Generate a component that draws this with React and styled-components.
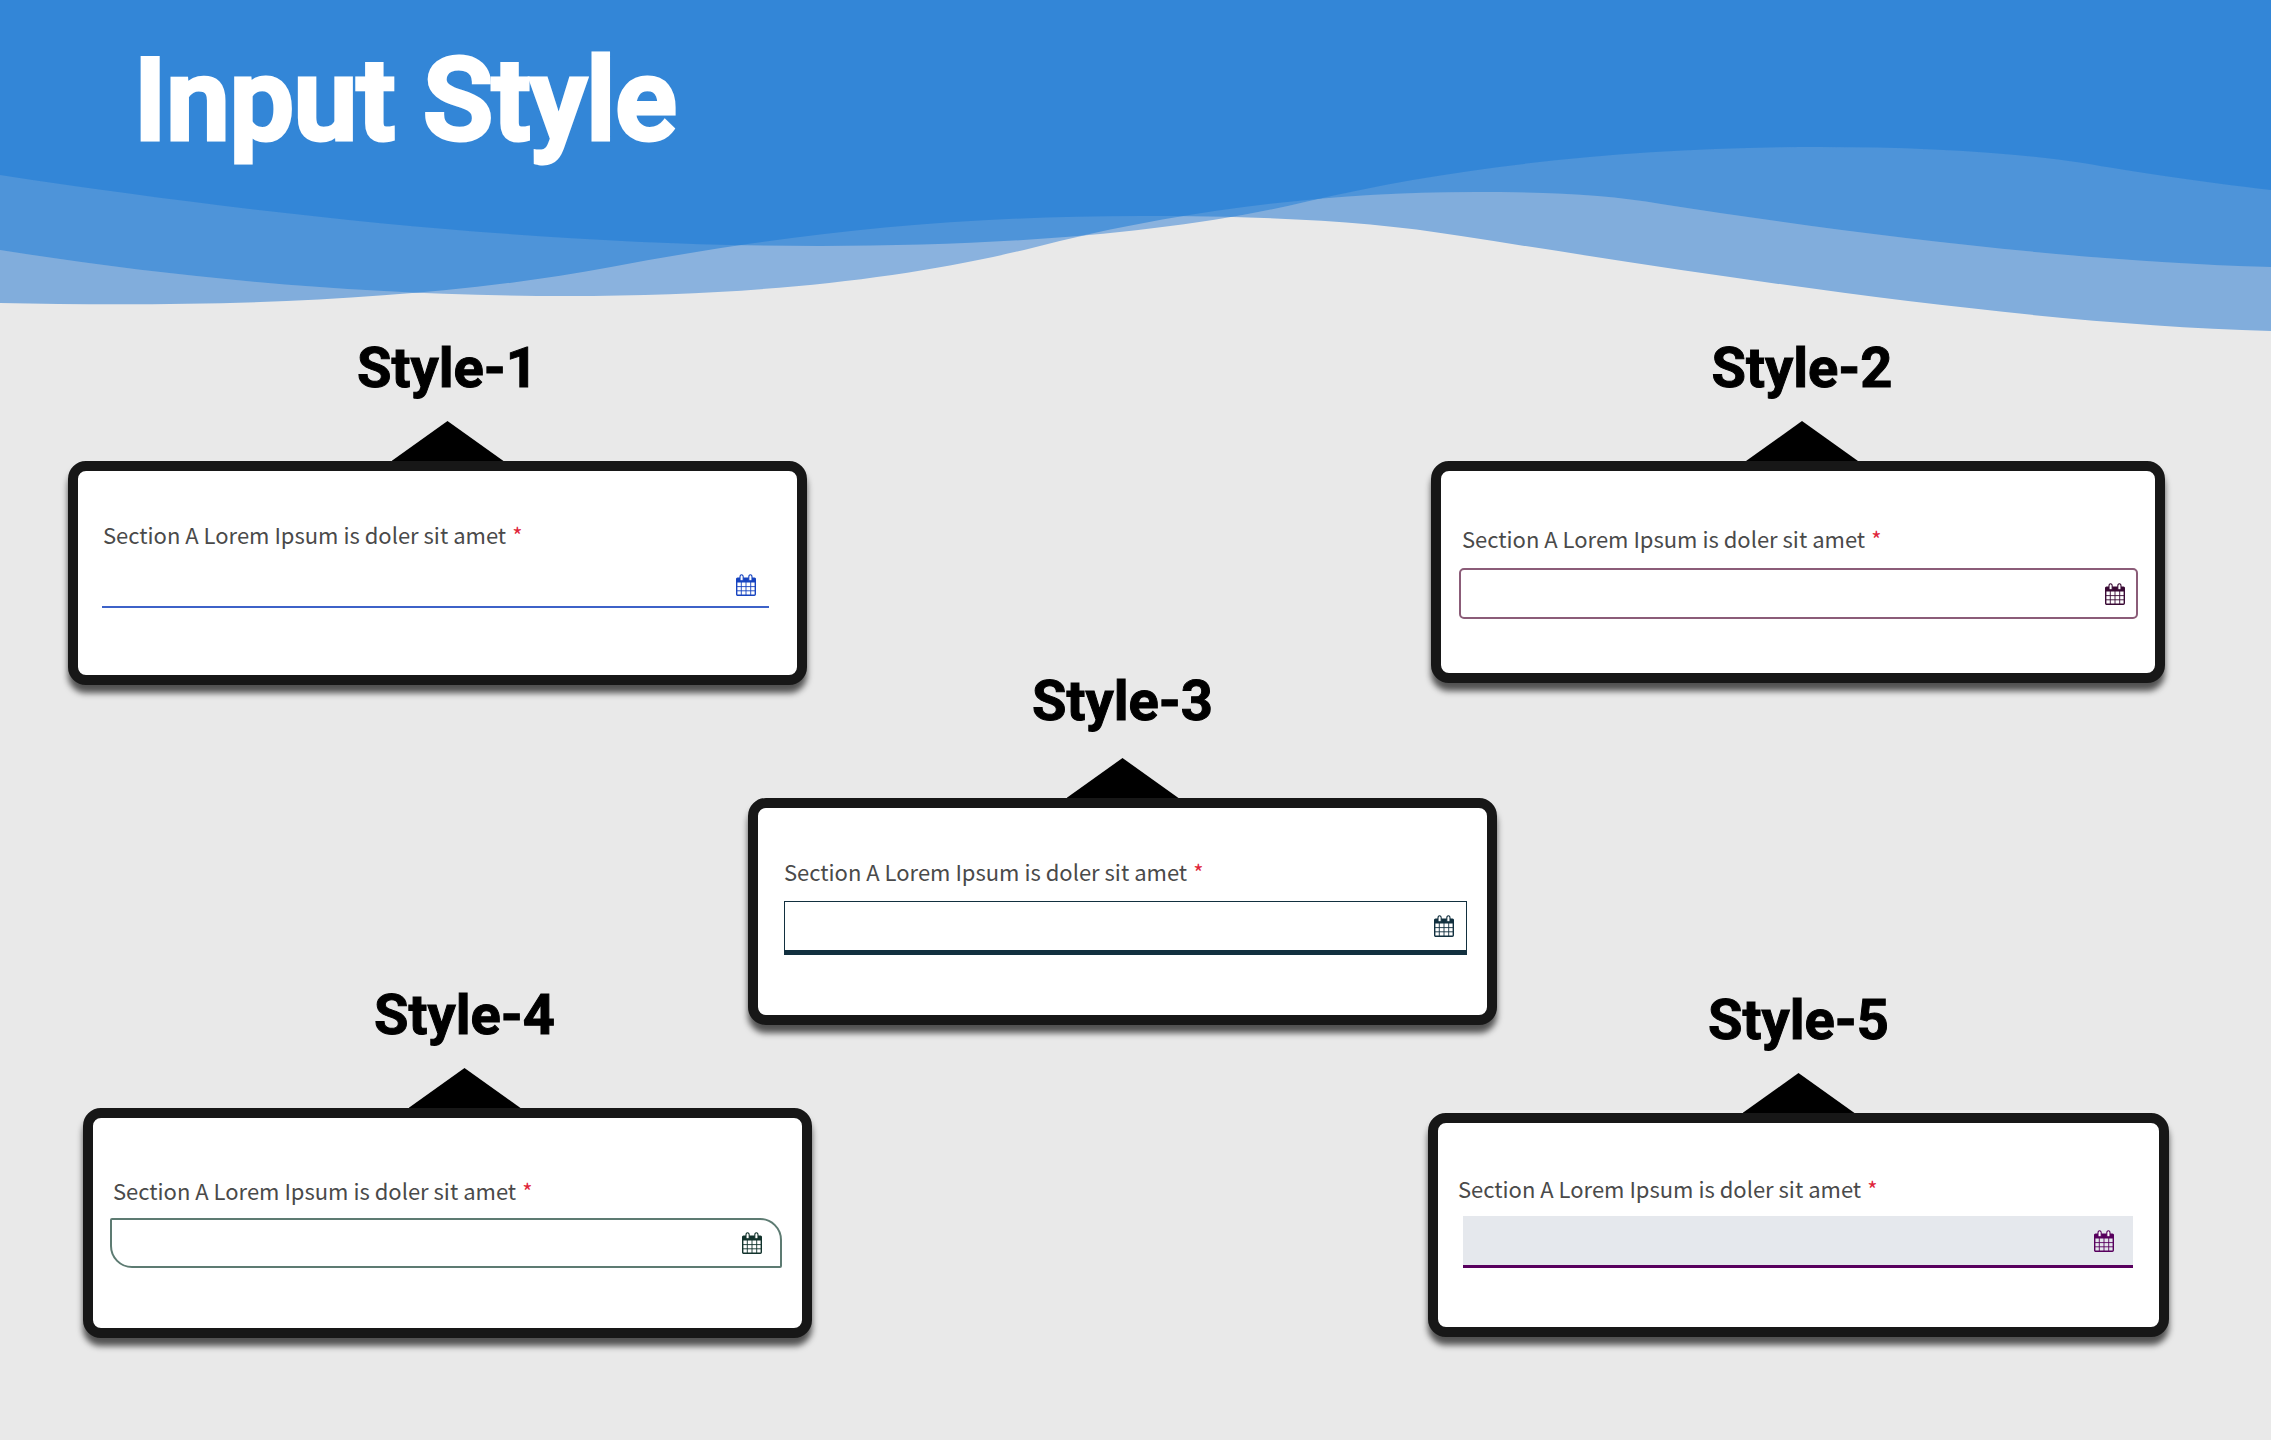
import React from "react";
import styled, { createGlobalStyle, css } from "styled-components";

const GlobalStyle = createGlobalStyle`
  *, *::before, *::after { box-sizing: border-box; }
  body { margin: 0; background: #e9e9e9; font-family: Roboto, sans-serif; }
`;

const Page = styled.div`
  min-height: 100vh;
  padding-bottom: 80px;
`;

const Header = styled.header`
  position: relative;
  height: 336px;
  padding: 32px 134px 0;
`;

const WaveArt = styled.svg`
  position: absolute;
  top: 0;
  left: 0;
  width: 100%;
  height: 336px;
`;

const PageTitle = styled.h1`
  position: relative;
  margin: 0;
  color: #fff;
  font-size: 114px;
  line-height: 136px;
  font-weight: 500;
  -webkit-text-stroke: 5px #fff;
  stroke-linejoin: round;
`;

const Board = styled.main`
  display: grid;
  grid-template-columns: 680fr 64fr 616fr 69fr 672fr;
  grid-template-rows: 337px 310px auto;
  align-items: start;
  padding: 0 102px 0 68px;
`;

const Showcase = styled.section`
  grid-column: ${(p) => p.$columns};
  grid-row: ${(p) => p.$rows};
  margin: ${(p) => p.$margin};
`;

const Heading = styled.div`
  display: flex;
  flex-direction: column;
  align-items: center;
  justify-content: space-between;
  height: ${(p) => p.$height}px;
  padding-left: ${(p) => p.$indent}px;
`;

const StyleName = styled.h2`
  margin: 0;
  color: #000;
  font-size: 56px;
  line-height: 64px;
  font-weight: 700;
  -webkit-text-stroke: 1px #000;
`;

const Pointer = styled.div`
  width: 112px;
  height: 40px;
  background: #000;
  clip-path: polygon(50% 0, 100% 100%, 0 100%);
`;

const Card = styled.div`
  height: ${(p) => p.$height}px;
  padding: ${(p) => p.$padding};
  border: 10px solid #171717;
  border-radius: 18px;
  background: #fff;
  box-shadow: 0 8px 6px rgba(0, 0, 0, 0.65);
`;

const Label = styled.label`
  display: block;
  padding-left: ${(p) => p.$indent}px;
  color: #4a4a4a;
  font-family: "Noto Sans CJK SC", "Noto Sans", sans-serif;
  font-size: 22px;
  line-height: 32px;
`;

const Required = styled.span`
  margin-left: 6px;
  color: #e0253a;
`;

const fieldLooks = {
  underline: css`
    height: 44px;
    padding-right: 13px;
    border-bottom: 2px solid #3d62c8;
    color: #1744c0;
  `,
  rounded: css`
    height: 51px;
    padding-right: 11px;
    border: 2px solid #8b5c78;
    border-radius: 5px;
    color: #3a0a35;
  `,
  heavyBase: css`
    height: 54px;
    padding-right: 12px;
    border: 1px solid #12303f;
    border-bottom-width: 5px;
    color: #12303f;
  `,
  leaf: css`
    height: 50px;
    padding-right: 18px;
    border: 2px solid #5d7b72;
    border-radius: 2px 22px 2px 22px;
    color: #12332c;
  `,
  filled: css`
    height: 52px;
    margin-left: 5px;
    padding-right: 19px;
    border-bottom: 3px solid #58005e;
    background: #e5e8ed;
    color: #58005e;
  `,
};

const Field = styled.div`
  display: flex;
  align-items: center;
  margin-top: ${(p) => p.$gap}px;
  ${(p) => fieldLooks[p.$look]}
`;

const DateInput = styled.input`
  flex: 1;
  min-width: 0;
  height: 100%;
  padding: 0 12px;
  border: 0;
  outline: 0;
  background: transparent;
  color: inherit;
  font: 22px "Noto Sans CJK SC", "Noto Sans", sans-serif;
`;

const PickButton = styled.button`
  display: flex;
  padding: 0;
  border: 0;
  background: transparent;
  color: inherit;
  cursor: pointer;
`;

function CalendarIcon() {
  return (
    <svg width="20" height="22" viewBox="0 0 20 22" aria-hidden="true">
      <path d="M0 5q0-1.500 1.500-1.500h17q1.500 0 1.500 1.500v3.500H0z" fill="currentColor" />
      <rect x="0.7" y="5" width="18.600" height="16.300" rx="1" fill="none" stroke="currentColor" strokeWidth="1.400" />
      <path d="M5.300 8v13M10 8v13M14.700 8v13M1 12.600h18M1 16.800h18" stroke="currentColor" strokeWidth="0.9" fill="none" />
      <path d="M4 6.800V3a1.600 2.300 0 0 1 3.200 0v3.800zM12.800 6.800V3a1.600 2.300 0 0 1 3.200 0v3.800z" fill="#fff" stroke="currentColor" strokeWidth="1.100" />
    </svg>
  );
}

const CREST =
  "M0 0V175C250 213 540 246 820 246C1010 246 1180 232 1305 202C1460 165 1640 147 1820 147C1920 147 2010 152 2083 163C2130 171 2200 182 2271 190V0Z";
const MIDDLE =
  "M0 0V250C170 277 360 296 567 296C760 296 910 278 1032 248C1160 215 1310 192 1475 192C1550 192 1610 195 1661 204C1860 235 2080 262 2271 267V0Z";
const SWELL =
  "M0 0V303C200 307 420 303 611 267C765 238 930 216 1140 216C1270 216 1370 221 1461 236C1760 283 2030 324 2271 331V0Z";

function Waves() {
  return (
    <WaveArt viewBox="0 0 2271 336" preserveAspectRatio="none" aria-hidden="true">
      <clipPath id="crest"><path d={CREST} /></clipPath>
      <clipPath id="middle"><path d={MIDDLE} /></clipPath>
      <path d={SWELL} fill="#81addc" />
      <path d={MIDDLE} fill="#8ab2de" />
      <path d={CREST} fill="#8ab2de" />
      <path d={SWELL} fill="#4e94d9" clipPath="url(#middle)" />
      <path d={SWELL} fill="#4e94d9" clipPath="url(#crest)" />
      <path d={MIDDLE} fill="#4e94d9" clipPath="url(#crest)" />
      <g clipPath="url(#crest)">
        <path d={SWELL} fill="#3386d7" clipPath="url(#middle)" />
      </g>
    </WaveArt>
  );
}

const SAMPLES = [
  { id: 1, look: "underline", columns: "1 / 3", rows: "1 / 3", margin: "0 5px 0 0", shift: 20, rise: 125, height: 224, padding: "47px 28px 0 24px", indent: 1, gap: 14 },
  { id: 2, look: "rounded", columns: "4 / 6", rows: "1 / 3", margin: "0 4px 0 3px", shift: 8, rise: 125, height: 222, padding: "51px 17px 0 18px", indent: 3, gap: 14 },
  { id: 3, look: "heavyBase", columns: "2 / 5", rows: "2 / 4", margin: "-4px 0 0", shift: 0, rise: 129, height: 227, padding: "47px 20px 0 26px", indent: 0, gap: 14 },
  { id: 4, look: "leaf", columns: "1 / 3", rows: "3 / 4", margin: "0 0 0 15px", shift: 34, rise: 125, height: 230, padding: "56px 20px 0 17px", indent: 3, gap: 12 },
  { id: 5, look: "filled", columns: "4 / 6", rows: "3 / 4", margin: "5px 0 0", shift: 0, rise: 125, height: 224, padding: "49px 26px 0 20px", indent: 0, gap: 12 },
];

function Sample({ sample }) {
  const inputId = `date-${sample.id}`;
  return (
    <Showcase $columns={sample.columns} $rows={sample.rows} $margin={sample.margin}>
      <Heading $indent={sample.shift} $height={sample.rise}>
        <StyleName>Style-{sample.id}</StyleName>
        <Pointer />
      </Heading>
      <Card $height={sample.height} $padding={sample.padding}>
        <Label htmlFor={inputId} $indent={sample.indent}>
          Section A Lorem Ipsum is doler sit amet
          <Required>*</Required>
        </Label>
        <Field $look={sample.look} $gap={sample.gap}>
          <DateInput id={inputId} type="text" required />
          <PickButton type="button" aria-label="Pick a date">
            <CalendarIcon />
          </PickButton>
        </Field>
      </Card>
    </Showcase>
  );
}

export default function App() {
  return (
    <Page>
      <GlobalStyle />
      <Header>
        <Waves />
        <PageTitle>Input Style</PageTitle>
      </Header>
      <Board>
        {SAMPLES.map((sample) => (
          <Sample key={sample.id} sample={sample} />
        ))}
      </Board>
    </Page>
  );
}
